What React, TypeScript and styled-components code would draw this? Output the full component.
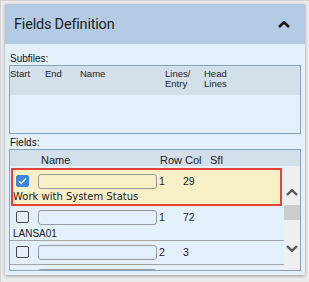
import React from 'react';
import styled, { createGlobalStyle, css } from 'styled-components';

const GlobalStyle = createGlobalStyle`
  html, body {
    margin: 0;
    padding: 0;
    background: #ececec;
  }
  * {
    box-sizing: border-box;
  }
`;

const Frame = styled.div`
  width: 309px;
  height: 282px;
  border-top: 1px solid #d2d2d2;
  border-left: 1px solid #d2d2d2;
  padding: 3px 4px 0 4px;
  font-family: 'Liberation Sans', Arial, sans-serif;
  color: #1c1c1c;
`;

const Panel = styled.div`
  width: 300px;
  height: 271px;
  background: #e4f0fc;
  box-shadow: 0 1px 3px rgba(0, 0, 0, 0.35);
  display: flex;
  flex-direction: column;
`;

const PanelHeader = styled.div`
  height: 40px;
  flex: none;
  background: #b4cbe4;
  display: flex;
  align-items: center;
  justify-content: space-between;
  padding: 0 15px 0 9px;
`;

const Title = styled.span`
  font-family: Roboto, 'Liberation Sans', sans-serif;
  font-size: 14.5px;
  letter-spacing: -0.2px;
  color: #222;
`;

const PanelBody = styled.div`
  padding: 0 4px;
  display: flex;
  flex-direction: column;
`;

const SectionLabel = styled.div<{ $top: number }>`
  font-size: 10px;
  line-height: 10px;
  height: 10px;
  margin: ${(p) => p.$top}px 0 0 1px;
  color: #111;
`;

const Table = styled.div<{ $height: number }>`
  margin-top: 1px;
  height: ${(p) => p.$height}px;
  border: 1px solid #86a3be;
  display: flex;
  flex-direction: column;
  overflow: hidden;
`;

const SubHeader = styled.div`
  height: 29px;
  flex: none;
  background: #d3dfe9;
  display: flex;
  padding-top: 3px;
  font-size: 9.5px;
  line-height: 10px;
  color: #222;
`;

const SubCol = styled.div<{ $w: number }>`
  width: ${(p) => p.$w}px;
  flex: none;
`;

const FieldHeader = styled.div`
  height: 16px;
  flex: none;
  background: #d3dfe9;
  display: flex;
  padding: 4px 0 0 31px;
  font-size: 11px;
  line-height: 12px;
  color: #222;
`;

const HeadCell = styled.div<{ $w: number }>`
  width: ${(p) => p.$w}px;
  flex: none;
`;

const FieldArea = styled.div`
  flex: 1;
  display: flex;
  min-height: 0;
`;

const Rows = styled.div`
  flex: 1;
  overflow: hidden;
`;

const Row = styled.div<{ $selected?: boolean; $desc?: boolean }>`
  padding: 3px 0 ${(p) => (p.$desc ? 0 : 4)}px 3px;
  border-bottom: 1px solid #a4a4a4;
  ${(p) =>
    p.$selected &&
    css`
      margin: 2px 2px 0 1px;
      padding: 3px 0 1px 0;
      border: 2px solid #e4423b;
      background: #f8f1c8;
    `}
`;

const Line = styled.div`
  height: 16px;
  display: flex;
  align-items: center;
  font-size: 10.5px;
`;

const Check = styled.div<{ $on?: boolean }>`
  width: 13px;
  height: 12px;
  margin-left: 3px;
  border: 1px solid #4a4a4a;
  border-radius: 2px;
  flex: none;
  display: flex;
  align-items: center;
  justify-content: center;
  ${(p) =>
    p.$on &&
    css`
      background: #3d85de;
      border-color: #3d85de;
    `}
`;

const NameInput = styled.div`
  width: 119px;
  height: 15px;
  margin-left: 9px;
  border: 1px solid #9c9c9c;
  border-radius: 3px;
  flex: none;
`;

const NumCell = styled.span<{ $w: number }>`
  width: ${(p) => p.$w}px;
  margin-left: 2px;
  flex: none;
  color: #1a1a1a;
`;

const Desc = styled.div<{ $verdana?: boolean }>`
  height: 12px;
  line-height: 12px;
  margin-top: ${(p) => (p.$verdana ? 2 : 3)}px;
  font-size: 10px;
  font-family: ${(p) => (p.$verdana ? "'DejaVu Sans', Verdana, sans-serif" : "'Liberation Sans', Arial, sans-serif")};
  color: #1a1a1a;
`;

const Scrollbar = styled.div`
  width: 16px;
  flex: none;
  background: #efefef;
  display: flex;
  flex-direction: column;
  align-items: center;
  padding-top: 23px;
`;

const Thumb = styled.div`
  width: 16px;
  height: 15px;
  margin: 9px 0 25px;
  background: #cdcdcd;
`;

const Chevron = ({ up, color, width }: { up?: boolean; color: string; width: number }) => (
  <svg width="12" height="7" viewBox="0 0 12 7">
    <path
      d={up ? 'M1 6 L6 1.2 L11 6' : 'M1 1 L6 5.8 L11 1'}
      fill="none"
      stroke={color}
      strokeWidth={width}
    />
  </svg>
);

const fields = [
  { on: true, row: '1', col: '29', desc: 'Work with System Status', verdana: true },
  { on: false, row: '1', col: '72', desc: 'LANSA01' },
  { on: false, row: '2', col: '3' },
  { on: false, row: '', col: '' },
];

export default function App() {
  return (
    <>
      <GlobalStyle />
      <Frame>
        <Panel>
          <PanelHeader>
            <Title>Fields Definition</Title>
            <Chevron up color="#1b1b1b" width={2.6} />
          </PanelHeader>
          <PanelBody>
            <SectionLabel $top={10}>Subfiles:</SectionLabel>
            <Table $height={69}>
              <SubHeader>
                <SubCol $w={35}>Start</SubCol>
                <SubCol $w={35}>End</SubCol>
                <SubCol $w={85}>Name</SubCol>
                <SubCol $w={39}>
                  Lines/
                  <br />
                  Entry
                </SubCol>
                <SubCol $w={40}>
                  Head
                  <br />
                  Lines
                </SubCol>
              </SubHeader>
            </Table>
            <SectionLabel $top={4}>Fields:</SectionLabel>
            <Table $height={122}>
              <FieldHeader>
                <HeadCell $w={119}>Name</HeadCell>
                <HeadCell $w={25}>Row</HeadCell>
                <HeadCell $w={25}>Col</HeadCell>
                <HeadCell $w={20}>Sfl</HeadCell>
              </FieldHeader>
              <FieldArea>
                <Rows>
                  {fields.map((f, i) => (
                    <Row key={i} $selected={f.on} $desc={!!f.desc}>
                      <Line>
                        <Check $on={f.on}>
                          {f.on && (
                            <svg width="9" height="8" viewBox="0 0 9 8">
                              <path d="M1 4.2 L3.4 6.4 L8 1.4" fill="none" stroke="#fff" strokeWidth="1.4" />
                            </svg>
                          )}
                        </Check>
                        <NameInput />
                        <NumCell $w={22}>{f.row}</NumCell>
                        <NumCell $w={22}>{f.col}</NumCell>
                      </Line>
                      {f.desc && <Desc $verdana={f.verdana}>{f.desc}</Desc>}
                    </Row>
                  ))}
                </Rows>
                <Scrollbar>
                  <Chevron up color="#555" width={2.4} />
                  <Thumb />
                  <Chevron color="#555" width={2.4} />
                </Scrollbar>
              </FieldArea>
            </Table>
          </PanelBody>
        </Panel>
      </Frame>
    </>
  );
}
